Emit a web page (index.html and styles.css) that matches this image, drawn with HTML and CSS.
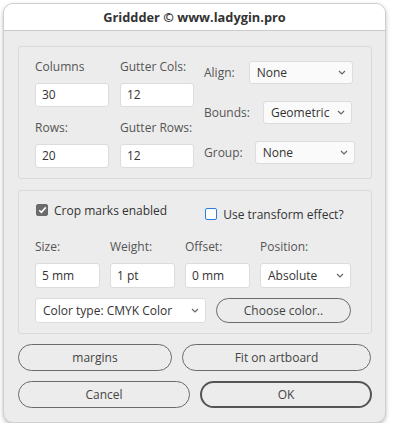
FILE: index.html
```html
<!DOCTYPE html>
<html lang="en">
<head>
    <meta charset="UTF-8">
    <title>Griddder</title>
    <link rel="stylesheet" href="styles.css">
</head>
<body>
    <div class="dialog">
        <div class="titlebar">Griddder © www.ladygin.pro</div>
        <div class="content">
            <div class="panel panel-grid">
                <div class="grid-fields">
                    <div class="field">
                        <label>Columns</label>
                        <div class="input">30</div>
                    </div>
                    <div class="field">
                        <label>Gutter Cols:</label>
                        <div class="input">12</div>
                    </div>
                    <div class="field">
                        <label>Rows:</label>
                        <div class="input">20</div>
                    </div>
                    <div class="field">
                        <label>Gutter Rows:</label>
                        <div class="input">12</div>
                    </div>
                </div>
                <div class="options">
                    <div class="option-row">
                        <label>Align:</label>
                        <div class="select select-align">
                            <span>None</span>
                            <svg width="8" height="5" viewBox="0 0 8 5"><path d="M1 1l3 3 3-3" fill="none" stroke="#666" stroke-width="1.2"/></svg>
                        </div>
                    </div>
                    <div class="option-row">
                        <label>Bounds:</label>
                        <div class="select select-bounds">
                            <span>Geometric</span>
                            <svg width="8" height="5" viewBox="0 0 8 5"><path d="M1 1l3 3 3-3" fill="none" stroke="#666" stroke-width="1.2"/></svg>
                        </div>
                    </div>
                    <div class="option-row">
                        <label>Group:</label>
                        <div class="select select-group">
                            <span>None</span>
                            <svg width="8" height="5" viewBox="0 0 8 5"><path d="M1 1l3 3 3-3" fill="none" stroke="#666" stroke-width="1.2"/></svg>
                        </div>
                    </div>
                </div>
            </div>

            <div class="panel panel-marks">
                <div class="check-row">
                    <div class="check">
                        <span class="box box-on">
                            <svg width="9" height="8" viewBox="0 0 9 8"><path d="M1.2 4.2l2.2 2.2 4.4-5" fill="none" stroke="#fff" stroke-width="1.6"/></svg>
                        </span>
                        Crop marks enabled
                    </div>
                    <div class="check check-transform">
                        <span class="box box-off"></span>
                        Use transform effect?
                    </div>
                </div>
                <div class="mark-fields">
                    <div class="field">
                        <label>Size:</label>
                        <div class="input input-mark">5 mm</div>
                    </div>
                    <div class="field">
                        <label>Weight:</label>
                        <div class="input input-mark">1 pt</div>
                    </div>
                    <div class="field">
                        <label>Offset:</label>
                        <div class="input input-mark">0 mm</div>
                    </div>
                    <div class="field">
                        <label>Position:</label>
                        <div class="select select-position">
                            <span>Absolute</span>
                            <svg width="8" height="5" viewBox="0 0 8 5"><path d="M1 1l3 3 3-3" fill="none" stroke="#666" stroke-width="1.2"/></svg>
                        </div>
                    </div>
                </div>
                <div class="color-row">
                    <div class="select select-color">
                        <span>Color type: CMYK Color</span>
                        <svg width="8" height="5" viewBox="0 0 8 5"><path d="M1 1l3 3 3-3" fill="none" stroke="#666" stroke-width="1.2"/></svg>
                    </div>
                    <button class="button button-color">Choose color..</button>
                </div>
            </div>

            <div class="button-row">
                <button class="button button-margins">margins</button>
                <button class="button button-fit">Fit on artboard</button>
            </div>
            <div class="button-row">
                <button class="button button-half">Cancel</button>
                <button class="button button-half button-ok">OK</button>
            </div>
        </div>
    </div>
</body>
</html>
```

FILE: styles.css
```css
body {
    margin: 0;
    padding: 0;
    background-color: #fff;
    font-family: 'Open Sans', sans-serif;
    font-size: 12px;
    color: #333;
}

.dialog {
    margin: 3px 0 0 3px;
    width: 381px;
    height: 418px;
    border: 1px solid #cfcfcf;
    border-radius: 10px;
    background: #ececec;
    box-shadow: 0 2px 4px rgba(0, 0, 0, 0.25);
    overflow: hidden;
    display: flex;
    flex-direction: column;
}

.titlebar {
    height: 26px;
    background: #fff;
    border-bottom: 1px solid #cbcbcb;
    font-weight: 700;
    font-size: 12.8px;
    color: #333;
    text-align: center;
    line-height: 27px;
}

.content {
    padding: 15px 0 0 14px;
}

.panel {
    width: 352px;
    border: 1px solid #dadada;
    border-radius: 3px;
}

.panel-grid {
    height: 131px;
    display: flex;
    padding: 0;
}

.grid-fields {
    display: grid;
    grid-template-columns: 74px 74px;
    column-gap: 11px;
    padding: 12px 0 0 16px;
    align-content: start;
}

.field label {
    display: block;
    height: 16px;
    line-height: 16px;
    color: #555;
    margin-bottom: 8px;
}

.grid-fields .field:nth-child(n+3) {
    margin-top: 13px;
}

.input {
    height: 22px;
    line-height: 22px;
    background: #fff;
    border: 1px solid #dcdcdc;
    border-radius: 3px;
    padding: 0 6px;
    color: #333;
}

.options {
    padding: 14px 0 0 10px;
}

.option-row {
    display: flex;
    align-items: center;
    height: 23px;
    margin-bottom: 17px;
}

.option-row label {
    color: #555;
}

.select {
    height: 21px;
    background: #fafafa;
    border: 1px solid #dcdcdc;
    border-radius: 3px;
    display: flex;
    align-items: center;
    justify-content: space-between;
    padding: 0 6px 0 7px;
    color: #333;
}

.select svg {
    flex-shrink: 0;
}

.select-align {
    width: 89px;
    margin-left: 14px;
}

.select-bounds {
    width: 74px;
    margin-left: 13px;
}

.select-group {
    width: 85px;
    margin-left: 12px;
}

.panel-marks {
    margin-top: 11px;
    height: 142px;
}

.check-row {
    display: flex;
    align-items: flex-start;
    padding: 12px 0 0 17px;
    height: 26px;
}

.check {
    display: flex;
    align-items: center;
    height: 14px;
    color: #333;
}

.check-transform {
    margin-left: 38px;
    margin-top: 4px;
}

.box {
    width: 11px;
    height: 11px;
    border-radius: 2px;
    margin-right: 6px;
    display: flex;
    align-items: center;
    justify-content: center;
}

.box-on {
    background: #6b6b6b;
    border: 1px solid #6b6b6b;
    width: 10px;
    height: 10px;
}

.box-off {
    background: #fff;
    border: 1px solid #2a7de1;
    width: 10px;
    height: 10px;
}

.mark-fields {
    display: flex;
    padding: 10px 0 0 16px;
}

.mark-fields .field {
    margin-right: 10px;
}

.input-mark {
    width: 51px;
    height: 23px;
    line-height: 23px;
}

.select-position {
    width: 76px;
    height: 23px;
    background: #fff;
}

.color-row {
    display: flex;
    padding: 10px 0 0 16px;
}

.select-color {
    width: 156px;
    height: 23px;
    background: #fff;
}

.button {
    font-family: 'Open Sans', sans-serif;
    font-size: 12px;
    color: #444;
    background: #ececec;
    border: 1px solid #6a6a6a;
    border-radius: 14px;
    padding: 0;
    height: 27px;
}

.button-color {
    width: 135px;
    height: 25px;
    margin-left: 10px;
}

.button-row {
    display: flex;
    margin-top: 10px;
}

.button-row + .button-row {
    margin-top: 10px;
}

.button-margins {
    width: 154px;
}

.button-fit {
    width: 189px;
    margin-left: 10px;
}

.button-half {
    width: 172px;
    margin-right: 10px;
}

.button-ok {
    border: 2px solid #555;
}
```
